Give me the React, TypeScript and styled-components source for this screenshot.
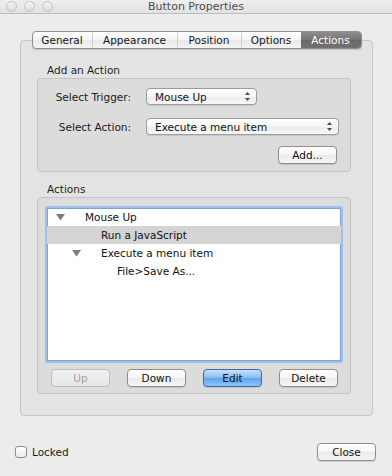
import styled, {createGlobalStyle} from "styled-components";

const GlobalStyle = createGlobalStyle`
    html, body {
        margin: 0;
        padding: 0;
        background: #ececec;
    }
    body {
        font-family: "DejaVu Sans", "Noto Sans", sans-serif;
        font-size: 10.5px;
        color: #1c1c1c;
    }
`

type TabDef = { label: string; width: number }

const tabs: TabDef[] = [
    {label: "General", width: 59},
    {label: "Appearance", width: 85},
    {label: "Position", width: 64},
    {label: "Options", width: 60},
    {label: "Actions", width: 60},
]

type TreeRow = { label: string; level: number; expanded?: boolean; selected?: boolean }

const rows: TreeRow[] = [
    {label: "Mouse Up", level: 0, expanded: true},
    {label: "Run a JavaScript", level: 1, selected: true},
    {label: "Execute a menu item", level: 1, expanded: true},
    {label: "File>Save As...", level: 2},
]

const Disclosure = () => (
    <svg width="9" height="7" viewBox="0 0 9 7">
        <polygon points="0,0 9,0 4.5,6.5" fill="#7e7e7e"/>
    </svg>
)

const UpDown = () => (
    <svg width="5" height="9" viewBox="0 0 5 9">
        <polygon points="2.5,0 5,3 0,3" fill="#4a4a4a"/>
        <polygon points="0,6 5,6 2.5,9" fill="#4a4a4a"/>
    </svg>
)

export default function App() {
    const activeTab = "Actions";

    return (
        <Window>
            <GlobalStyle/>
            <TitleBar>
                <Lights>
                    <Light/>
                    <Light/>
                    <Light/>
                </Lights>
                <Title>Button Properties</Title>
                <span/>
            </TitleBar>

            <TabView>
                <TabBar>
                    {tabs.map((t, i) => (
                        <Tab key={t.label} $width={t.width} $active={t.label === activeTab} $first={i === 0}>
                            {t.label}
                        </Tab>
                    ))}
                </TabBar>
                <TabBox>
                    <GroupLabel>Add an Action</GroupLabel>
                    <AddGroup>
                        <FormRow>
                            <FieldLabel>Select Trigger:</FieldLabel>
                            <Popup $width={111}>
                                <span>Mouse Up</span>
                                <UpDown/>
                            </Popup>
                        </FormRow>
                        <FormRow>
                            <FieldLabel>Select Action:</FieldLabel>
                            <Popup $width={193}>
                                <span>Execute a menu item</span>
                                <UpDown/>
                            </Popup>
                        </FormRow>
                        <AddRow>
                            <PushButton>Add...</PushButton>
                        </AddRow>
                    </AddGroup>

                    <GroupLabel $spaced>Actions</GroupLabel>
                    <ActionsGroup>
                        <OutlineList>
                            {rows.map((r) => (
                                <OutlineRow key={r.label} $level={r.level} $selected={!!r.selected}>
                                    <DisclosureSlot>{r.expanded && <Disclosure/>}</DisclosureSlot>
                                    {r.label}
                                </OutlineRow>
                            ))}
                        </OutlineList>
                        <ButtonRow>
                            <PushButton $variant="disabled">Up</PushButton>
                            <PushButton>Down</PushButton>
                            <PushButton $variant="primary">Edit</PushButton>
                            <PushButton>Delete</PushButton>
                        </ButtonRow>
                    </ActionsGroup>
                </TabBox>
            </TabView>

            <Footer>
                <CheckLabel>
                    <CheckBox/>
                    Locked
                </CheckLabel>
                <PushButton>Close</PushButton>
            </Footer>
        </Window>
    );
}

const Window = styled.div`
    width: 392px;
    height: 476px;
    display: flex;
    flex-direction: column;
    background: #ececec;
    overflow: hidden;
`

const TitleBar = styled.div`
    height: 13px;
    display: grid;
    grid-template-columns: 1fr auto 1fr;
    align-items: center;
    background: linear-gradient(#eeeeee, #e2e2e2);
    border-bottom: 1px solid #bcbcbc;
`

const Lights = styled.div`
    display: flex;
    gap: 7px;
    padding-left: 6px;
    align-self: start;
    padding-top: 1px;
`

const Light = styled.span`
    width: 11px;
    height: 11px;
    box-sizing: border-box;
    border-radius: 50%;
    border: 1px solid #c2c2c2;
    background: linear-gradient(#f4f4f4, #dcdcdc);
`

const Title = styled.div`
    font-size: 11px;
    line-height: 13px;
    color: #4d4d4d;
`

const TabView = styled.div`
    margin: 17px 19px 0 20px;
    display: flex;
    flex-direction: column;
    align-items: center;
`

const TabBar = styled.div`
    display: flex;
    height: 18px;
    box-sizing: border-box;
    border: 1px solid #8f8f8f;
    border-radius: 4px;
    overflow: hidden;
    background: linear-gradient(#ffffff, #f3f3f3 50%, #e9e9e9 51%, #f5f5f5);
    box-shadow: 0 1px 1px rgba(0, 0, 0, 0.15);
    margin-bottom: -9px;
    position: relative;
    z-index: 1;
`

const Tab = styled.div<{ $width: number; $active: boolean; $first: boolean }>`
    width: ${({$width}) => $width}px;
    box-sizing: border-box;
    display: flex;
    align-items: center;
    justify-content: center;
    border-left: ${({$first, $active}) => ($first || $active ? "none" : "1px solid #cfcfcf")};
    color: ${({$active}) => ($active ? "#ffffff" : "#151515")};
    background: ${({$active}) => ($active ? "linear-gradient(#8d8d8d, #747474 50%, #686868 51%, #727272)" : "transparent")};
`

const TabBox = styled.div`
    align-self: stretch;
    height: 376px;
    box-sizing: border-box;
    border: 1px solid #c6c6c6;
    border-radius: 4px;
    background: #e3e3e3;
    padding: 23px 21px 0 16px;
    display: flex;
    flex-direction: column;
`

const GroupLabel = styled.div<{ $spaced?: boolean }>`
    line-height: 13px;
    padding-left: 10px;
    margin-top: ${({$spaced}) => ($spaced ? "11px" : "0")};
    margin-bottom: 1px;
    color: #1f1f1f;
`

const Group = styled.div`
    box-sizing: border-box;
    border: 1px solid #c4c4c4;
    border-radius: 4px;
    background: #dcdcdc;
`

const AddGroup = styled(Group)`
    padding: 9px 11px 7px 0;
    display: flex;
    flex-direction: column;
    gap: 13px;
`

const FormRow = styled.div`
    display: grid;
    grid-template-columns: 93px auto;
    column-gap: 15px;
    align-items: center;
    justify-content: start;
`

const FieldLabel = styled.span`
    text-align: right;
    color: #1a1a1a;
`

const Popup = styled.div<{ $width: number }>`
    width: ${({$width}) => $width}px;
    height: 17px;
    box-sizing: border-box;
    display: flex;
    align-items: center;
    justify-content: space-between;
    padding: 0 6px 0 8px;
    border: 1px solid #9d9d9d;
    border-radius: 4px;
    background: linear-gradient(#ffffff, #f6f6f6 50%, #ececec 51%, #f7f7f7);
    box-shadow: 0 1px 1px rgba(0, 0, 0, 0.1);
    color: #111;
`

const AddRow = styled.div`
    display: flex;
    justify-content: flex-end;
    margin-top: -2px;
    padding-right: 2px;
`

const PushButton = styled.div<{ $variant?: "primary" | "disabled" }>`
    width: 59px;
    height: 18px;
    box-sizing: border-box;
    display: flex;
    align-items: center;
    justify-content: center;
    border-radius: 4px;
    border: 1px solid ${({$variant}) =>
            $variant === "primary" ? "#3f69a8" : $variant === "disabled" ? "#bdbdbd" : "#8e8e8e"};
    background: ${({$variant}) =>
            $variant === "primary"
                    ? "linear-gradient(#c9e0fa, #86bbf3 50%, #5fa2ef 51%, #8ec4f8)"
                    : $variant === "disabled"
                            ? "linear-gradient(#f2f2f2, #e6e6e6)"
                            : "linear-gradient(#ffffff, #f5f5f5 50%, #eaeaea 51%, #f6f6f6)"};
    color: ${({$variant}) => ($variant === "disabled" ? "#a3a3a3" : "#111")};
    box-shadow: ${({$variant}) => ($variant === "disabled" ? "none" : "0 1px 1px rgba(0, 0, 0, 0.12)")};
`

const ActionsGroup = styled(Group)`
    padding: 8px 7px 6px 7px;
    display: flex;
    flex-direction: column;
`

const OutlineList = styled.div`
    height: 157px;
    box-sizing: border-box;
    background: #ffffff;
    border: 2px solid #9fc0e8;
    box-shadow: inset 0 0 0 1px #7ea3d4;
    border-radius: 2px;
    display: flex;
    flex-direction: column;
`

const OutlineRow = styled.div<{ $level: number; $selected: boolean }>`
    height: 18px;
    display: flex;
    align-items: center;
    padding-left: ${({$level}) => 9 + $level * 16}px;
    background: ${({$selected}) => ($selected ? "#d4d4d4" : "transparent")};
    color: #111;
`

const DisclosureSlot = styled.span`
    width: 29px;
    display: flex;
    align-items: center;
`

const ButtonRow = styled.div`
    display: flex;
    gap: 17px;
    margin-top: 6px;
    padding-left: 6px;
`

const Footer = styled.div`
    flex: 1;
    display: flex;
    align-items: center;
    justify-content: space-between;
    padding: 12px 16px 0 15px;
`

const CheckLabel = styled.label`
    display: flex;
    align-items: center;
    gap: 5px;
    color: #1a1a1a;
`

const CheckBox = styled.span`
    width: 12px;
    height: 12px;
    box-sizing: border-box;
    border: 1px solid #8c8c8c;
    border-radius: 3px;
    background: linear-gradient(#ffffff, #ebebeb);
`
